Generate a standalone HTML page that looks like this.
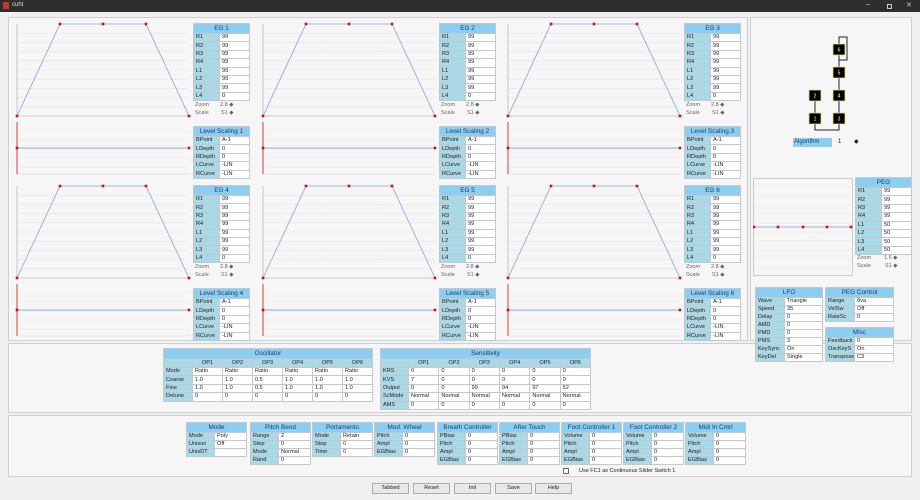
<!DOCTYPE html>
<html><head><meta charset="utf-8">
<style>
*{box-sizing:border-box;margin:0;padding:0}
body{width:920px;height:500px;background:#f0f0f0;font-family:"Liberation Sans",sans-serif;font-size:6px;color:#222;position:relative;overflow:hidden}
.a{position:absolute}
.tb{position:absolute;border-collapse:collapse;font-size:5.6px;table-layout:fixed}
.tb td{border:1px solid #c4c8cc;height:8.4px;line-height:7px;padding:0 2px;white-space:nowrap;overflow:hidden}
.tb td.h{background:#8ccdf2;color:#1e3c6e;text-align:center;font-size:6.4px;height:10px}
.tb td.l{background:#a9d8e6}
.tb td.v{background:#fff}
.tb td.c{background:#a9d8e6;text-align:center}
.pnl{position:absolute;border:1px solid #cfcfcf;background:#f6f6f6}
.btn{position:absolute;border:1px solid #adadad;background:#e8e8e8;text-align:center;font-size:5.6px;line-height:9px;height:11px}
.sm{position:absolute;font-size:5.5px;color:#666}
</style></head><body>
<div class="a" style="left:0;top:0;width:920px;height:12px;background:#2e2e2e"></div>
<div class="a" style="left:3px;top:2px;width:6px;height:7px;background:#c0392b"></div>
<div class="a" style="left:12px;top:2px;color:#ddd;font-size:6px">cuht</div>
<div class="a" style="left:866px;top:1px;color:#ccc;font-size:7px">–</div>
<div class="a" style="left:887px;top:4px;width:5px;height:5px;border:1px solid #ccc"></div>
<div class="a" style="left:906px;top:1px;color:#ccc;font-size:7px">✕</div>
<div class="pnl" style="left:8px;top:17px;width:740px;height:324px"></div>
<div class="pnl" style="left:750px;top:17px;width:162px;height:324px"></div>
<div class="pnl" style="left:8px;top:343px;width:904px;height:70px"></div>
<div class="pnl" style="left:8px;top:415px;width:904px;height:62px"></div>
<svg class="a" style="left:750px;top:20px" width="170" height="140">
<g stroke="#222" stroke-width="1" fill="none">
<path d="M89 24 V17 H97 V40 H89"/><path d="M89 30 V96 M65 76 V96 M65 100 V110 H89 V100"/>
</g>
<g fill="#000" stroke="#e8e070" stroke-width="0.8">
<rect x="83" y="24" width="12" height="11"/><rect x="83" y="47" width="12" height="11"/><rect x="83" y="70" width="12" height="11"/>
<rect x="59" y="70" width="12" height="11"/><rect x="59" y="93" width="12" height="11"/><rect x="83" y="93" width="12" height="11"/>
</g>
<g fill="#fff" font-size="5" text-anchor="middle" font-family="Liberation Sans">
<text x="89" y="31.5">6</text><text x="89" y="54.5">5</text><text x="89" y="77.5">4</text><text x="65" y="77.5">2</text><text x="65" y="100.5">1</text><text x="89" y="100.5">3</text>
</g>
</svg>
<div class="a" style="left:793px;top:138px;width:39px;height:9px;background:#8ccdf2;color:#1e3c6e;font-size:6px;line-height:9px;padding-left:1px">Algorithm</div><div class="a" style="left:838px;top:139px;font-size:6px">1</div><div class="a" style="left:854px;top:138px;font-size:6px">◆</div>
<div id="root"></div>
<script>
let h='';
function kv(x,y,w,title,rows,lw,rh){
 rh=rh||8.4;
 let s=`<table class="tb" style="left:${x}px;top:${y}px;width:${w}px"><colgroup><col style="width:${lw}px"><col></colgroup><tr><td class="h" colspan="2">${title}</td></tr>`;
 rows.forEach(r=>s+=`<tr><td class="l" style="height:${rh}px">${r[0]}</td><td class="v" style="height:${rh}px">${r[1]}</td></tr>`);
 return s+'</table>';
}
const cols=[0,246,491],rowsY=[0,162];
let eg=1,ls=1;
rowsY.forEach(dy=>{cols.forEach(dx=>{
 const x0=17+dx,y0=24+dy;
 let g=`<svg class="a" style="left:${x0-3}px;top:${y0-3}px" width="180" height="100">`;
 for(let i=1;i<10;i++)g+=`<line x1="3" x2="175" y1="${3+i*9.2}" y2="${3+i*9.2}" stroke="#d4d4d4" stroke-width="0.6" stroke-dasharray="1,1"/>`;
 g+=`<line x1="3" x2="3" y1="3" y2="95" stroke="#bbb" stroke-width="0.8"/><line x1="3" x2="175" y1="95" y2="95" stroke="#bbb" stroke-width="0.8"/>`;
 g+=`<polyline points="3,95 46,3 89,3 132,3 175,95" fill="none" stroke="#9ab0d8" stroke-width="0.9"/>`;
 g+=`<line x1="46" x2="132" y1="3" y2="3" stroke="#cdd6ea" stroke-width="2"/>`;
 [[3,95],[46,3],[89,3],[132,3],[175,95]].forEach(p=>g+=`<rect x="${p[0]-1.3}" y="${p[1]-1.3}" width="2.6" height="2.6" fill="#d01010"/>`);
 h+=g+'</svg>';
 const ly=y0+98;
 let l=`<svg class="a" style="left:${x0-3}px;top:${ly}px" width="180" height="56">`;
 for(let i=1;i<6;i++)l+=`<line x1="3" x2="175" y1="${i*9}" y2="${i*9}" stroke="#d4d4d4" stroke-width="0.6" stroke-dasharray="1,1"/>`;
 l+=`<line x1="3" x2="175" y1="52" y2="52" stroke="#ccc" stroke-width="0.6"/><line x1="3" x2="3" y1="0" y2="52" stroke="#d01010" stroke-width="0.8"/>`;
 l+=`<line x1="3" x2="175" y1="26" y2="26" stroke="#9ab0d8" stroke-width="0.9"/><rect x="1.7" y="24.7" width="2.6" height="2.6" fill="#d01010"/><rect x="173.7" y="24.7" width="2.6" height="2.6" fill="#d01010"/>`;
 h+=l+'</svg>';
 const tx=193+dx,ty=23+dy;
 h+=kv(tx,ty,57,'EG '+eg,[['R1',99],['R2',99],['R3',99],['R4',99],['L1',99],['L2',99],['L3',99],['L4',0]],26);
 h+=`<div class="sm" style="left:${tx+2}px;top:${ty+79}px">Zoom</div><div class="sm" style="left:${tx+27}px;top:${ty+79}px">2.8 ◆</div>`;
 h+=`<div class="sm" style="left:${tx+2}px;top:${ty+87}px">Scale</div><div class="sm" style="left:${tx+28}px;top:${ty+87}px">S1 ◆</div>`;
 h+=kv(tx,ty+103,57,'Level Scaling '+ls,[['BPoint','A-1'],['LDepth',0],['RDepth',0],['LCurve','-LIN'],['RCurve','-LIN']],26);
 eg++;ls++;
})});
let p=`<svg class="a" style="left:753px;top:178px" width="100" height="99"><rect x="0.5" y="0.5" width="99" height="97" fill="none" stroke="#ccc"/>`;
for(let i=1;i<11;i++)p+=`<line x1="1" x2="99" y1="${i*9}" y2="${i*9}" stroke="#d4d4d4" stroke-width="0.6" stroke-dasharray="1,1"/>`;
p+=`<line x1="0" x2="99" y1="49" y2="49" stroke="#9ab0d8" stroke-width="0.9"/>`;
[1,25,50,74,98].forEach(x=>p+=`<rect x="${x-1.3}" y="47.7" width="2.6" height="2.6" fill="#d01010"/>`);
h+=p+'</svg>';
h+=kv(855,177,57,'PEG',[['R1',99],['R2',99],['R3',99],['R4',99],['L1',50],['L2',50],['L3',50],['L4',50]],26);
h+=`<div class="sm" style="left:857px;top:255px">Zoom</div><div class="sm" style="left:884px;top:255px">1.6 ◆</div><div class="sm" style="left:857px;top:263px">Scale</div><div class="sm" style="left:885px;top:263px">S1 ◆</div>`;
h+=kv(755,287,68,'LFO',[['Wave','Triangle'],['Speed',35],['Delay',0],['AMD',0],['PMD',0],['PMS',3],['KeySync','On'],['KeyDel','Single']],29,7.9);
h+=kv(825,287,69,'PEG Control',[['Range','8va'],['VelSw','Off'],['RateSc',0]],29,7.9);
h+=kv(825,327,69,'Misc',[['Feedback',0],['OscKeyS','On'],['Transpose','C3']],29,7.9);
function grid(x,y,w,title,lw,cw,rows){
 let s=`<table class="tb" style="left:${x}px;top:${y}px;width:${w}px"><colgroup><col style="width:${lw}px">`+'<col>'.repeat(6)+`</colgroup><tr><td class="h" colspan="7">${title}</td></tr><tr><td class="c"></td>`;
 for(let i=1;i<=6;i++)s+=`<td class="c" style="height:9px">OP${i}</td>`;
 s+='</tr>';
 rows.forEach(r=>{s+=`<tr><td class="l">${r[0]}</td>`;r[1].forEach(v=>s+=`<td class="v">${v}</td>`);s+='</tr>'});
 return s+'</table>';
}
h+=grid(163,348,210,'Oscillator',29,0,[['Mode',Array(6).fill('Ratio')],['Coarse',['1.0','1.0','0.5','1.0','1.0','1.0']],['Fine',['1.0','1.0','0.5','1.0','1.0','1.0']],['Detune',[0,0,0,0,0,0]]]);
h+=grid(380,348,211,'Sensitivity',28,0,[['KRS',[0,0,0,0,0,0]],['KVS',[7,0,0,0,0,0]],['Output',[0,0,99,94,97,52]],['ScMode',Array(6).fill('Normal')],['AMS',[0,0,0,0,0,0]]]);
const bt=[[186,'Mode',[['Mode','Poly'],['Unison','Off'],['UnisDT','']]],[250,'Pitch Bend',[['Range',2],['Step',0],['Mode','Normal'],['Rand',0]]],[312,'Portamento',[['Mode','Retain'],['Step',0],['Time',0]]],[374,'Mod. Wheel',[['Pitch',0],['Ampl',0],['EGBias',0]]],[437,'Breath Controller',[['PBias',0],['Pitch',0],['Ampl',0],['EGBias',0]]],[499,'After Touch',[['PBias',0],['Pitch',0],['Ampl',0],['EGBias',0]]],[561,'Foot Controller 1',[['Volume',0],['Pitch',0],['Ampl',0],['EGBias',0]]],[623,'Foot Controller 2',[['Volume',0],['Pitch',0],['Ampl',0],['EGBias',0]]],[685,'Midi In Cntrl',[['Volume',0],['Pitch',0],['Ampl',0],['EGBias',0]]]];
bt.forEach(b=>h+=kv(b[0],422,61,b[1],b[2],28,7.9));
h+=`<div class="a" style="left:563px;top:468px;width:6px;height:6px;border:1px solid #666;background:#fff"></div><div class="a" style="left:579px;top:468px;font-size:5.5px">Use FC1 as Continuous Slider Switch 1</div>`;
[[372,'Tabbed'],[413,'Reset'],[454,'Init'],[495,'Save'],[535,'Help']].forEach(b=>h+=`<div class="btn" style="left:${b[0]}px;top:483px;width:37px">${b[1]}</div>`);
document.getElementById('root').innerHTML=h;
</script>
</body></html>
